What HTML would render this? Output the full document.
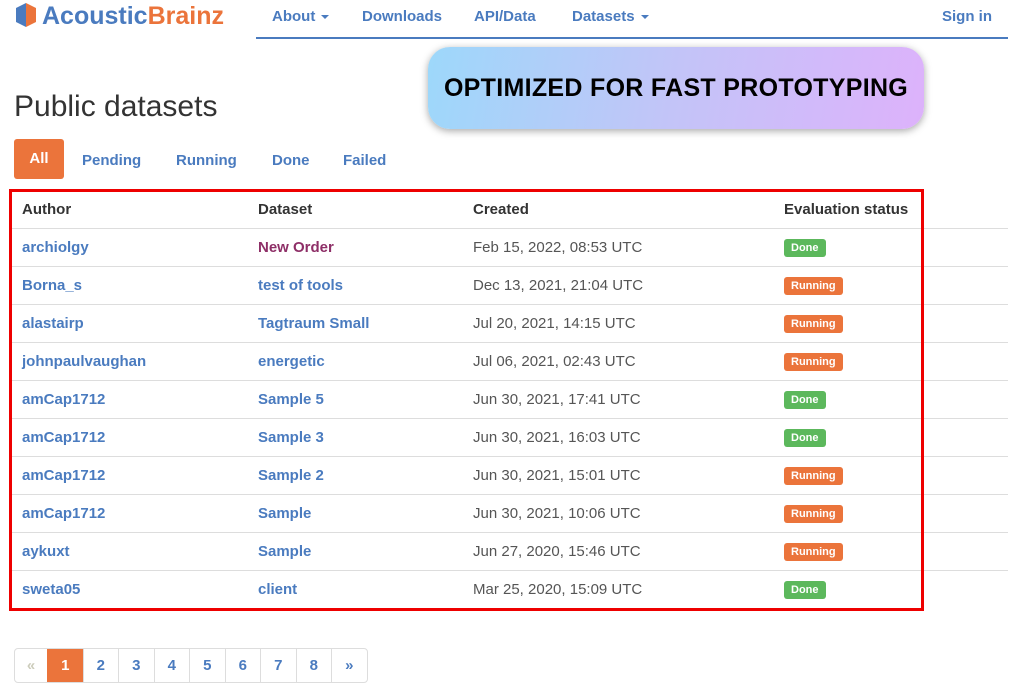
<!DOCTYPE html>
<html><head><meta charset="utf-8"><style>
*{box-sizing:border-box}
body{margin:0;width:1024px;height:683px;overflow:hidden;background:#fff;font-family:"Liberation Sans",sans-serif;color:#333;position:relative}
a{color:#4a7bbf;text-decoration:none}
.nav{position:absolute;left:256px;top:0;width:752px;height:39px;border-bottom:2px solid #4a7bbf}
.nav span{position:absolute;top:8px;font-size:15px;font-weight:bold;color:#4a7bbf}
.caret{display:inline-block;border-left:4px solid transparent;border-right:4px solid transparent;border-top:4px solid #4a7bbf;vertical-align:middle;margin-left:6px}
.logo{position:absolute;left:14px;top:2px;font-size:25px;font-weight:bold;white-space:nowrap}
h1{position:absolute;left:14px;top:90px;margin:0;font-size:30px;font-weight:normal;color:#333}
.banner{position:absolute;left:428px;top:47px;width:496px;height:82px;border-radius:22px;background:linear-gradient(100deg,#9dd8fa 0%,#c3c4f8 50%,#ddb2fb 100%);box-shadow:0 2px 8px rgba(0,0,0,.35);font-weight:900;font-size:25px;color:#000;text-align:center;line-height:82px;letter-spacing:.3px}
.tabs{position:absolute;left:14px;top:139px;height:40px}
.tabs span{position:absolute;top:2px;height:40px;line-height:40px;font-size:15px;color:#4a7bbf;font-weight:bold;white-space:nowrap}
.tabs .tab-all{top:0;background:#eb743b;color:#fff;border-radius:3px;width:50px;text-align:center}
table{position:absolute;left:10px;top:190px;width:998px;border-collapse:collapse;font-size:15px}
td,th{height:38px;padding:1px 0 0 12px;text-align:left;border-top:1px solid #ddd}
th{border-top:none;font-weight:bold;color:#333;border-bottom:1px solid #ddd}
td a{font-weight:bold}
td.c{color:#555}
.lab{display:inline-block;color:#fff;font-size:11px;font-weight:bold;padding:3px 7px;border-radius:3px}
.d{background:#5cb85c}.r{background:#eb743b}
.red{position:absolute;left:9px;top:189px;width:915px;height:422px;border:3px solid #e00}
.pag{position:absolute;left:14px;top:648px;height:35px;display:flex;border:1px solid #ddd;border-radius:4px;overflow:hidden}
.pag span{width:35.5px;height:33px;line-height:33px;text-align:center;border-left:1px solid #ddd;color:#4a7bbf;font-weight:bold;font-size:15px}
.pag span:first-child{border-left:none;width:32px;color:#ccb}
.pag .on{background:#eb743b;color:#fff;border-color:#eb743b}
</style></head><body>
<div class="logo"><svg width="24" height="26" viewBox="0 0 24 26" style="vertical-align:-4px;margin-right:4px"><polygon points="12,1 22,6 22,20 12,25" fill="#eb743b"/><polygon points="12,1 2,6 2,20 12,25" fill="#4a7bbf"/></svg><span style="color:#4a7bbf">Acoustic</span><span style="color:#eb743b">Brainz</span></div>
<div class="nav">
<span style="left:16px">About<i class="caret"></i></span>
<span style="left:106px">Downloads</span>
<span style="left:218px">API/Data</span>
<span style="left:316px">Datasets<i class="caret"></i></span>
<span style="left:686px">Sign in</span>
</div>
<h1>Public datasets</h1>
<div class="banner">OPTIMIZED FOR FAST PROTOTYPING</div>
<div class="tabs">
<span class="tab-all" style="left:0">All</span>
<span style="left:68px">Pending</span>
<span style="left:162px">Running</span>
<span style="left:258px">Done</span>
<span style="left:329px">Failed</span>
</div>
<table>
<colgroup><col style="width:236px"><col style="width:215px"><col style="width:311px"><col></colgroup>
<tr><th>Author</th><th>Dataset</th><th>Created</th><th>Evaluation status</th></tr>
<tr><td><a>archiolgy</a></td><td><a style="color:#8e2f67">New Order</a></td><td class="c">Feb 15, 2022, 08:53 UTC</td><td><span class="lab d">Done</span></td></tr>
<tr><td><a>Borna_s</a></td><td><a>test of tools</a></td><td class="c">Dec 13, 2021, 21:04 UTC</td><td><span class="lab r">Running</span></td></tr>
<tr><td><a>alastairp</a></td><td><a>Tagtraum Small</a></td><td class="c">Jul 20, 2021, 14:15 UTC</td><td><span class="lab r">Running</span></td></tr>
<tr><td><a>johnpaulvaughan</a></td><td><a>energetic</a></td><td class="c">Jul 06, 2021, 02:43 UTC</td><td><span class="lab r">Running</span></td></tr>
<tr><td><a>amCap1712</a></td><td><a>Sample 5</a></td><td class="c">Jun 30, 2021, 17:41 UTC</td><td><span class="lab d">Done</span></td></tr>
<tr><td><a>amCap1712</a></td><td><a>Sample 3</a></td><td class="c">Jun 30, 2021, 16:03 UTC</td><td><span class="lab d">Done</span></td></tr>
<tr><td><a>amCap1712</a></td><td><a>Sample 2</a></td><td class="c">Jun 30, 2021, 15:01 UTC</td><td><span class="lab r">Running</span></td></tr>
<tr><td><a>amCap1712</a></td><td><a>Sample</a></td><td class="c">Jun 30, 2021, 10:06 UTC</td><td><span class="lab r">Running</span></td></tr>
<tr><td><a>aykuxt</a></td><td><a>Sample</a></td><td class="c">Jun 27, 2020, 15:46 UTC</td><td><span class="lab r">Running</span></td></tr>
<tr><td><a>sweta05</a></td><td><a>client</a></td><td class="c">Mar 25, 2020, 15:09 UTC</td><td><span class="lab d">Done</span></td></tr>
</table>
<div class="red"></div>
<div class="pag"><span>«</span><span class="on">1</span><span>2</span><span>3</span><span>4</span><span>5</span><span>6</span><span>7</span><span>8</span><span>»</span></div>
</body></html>
